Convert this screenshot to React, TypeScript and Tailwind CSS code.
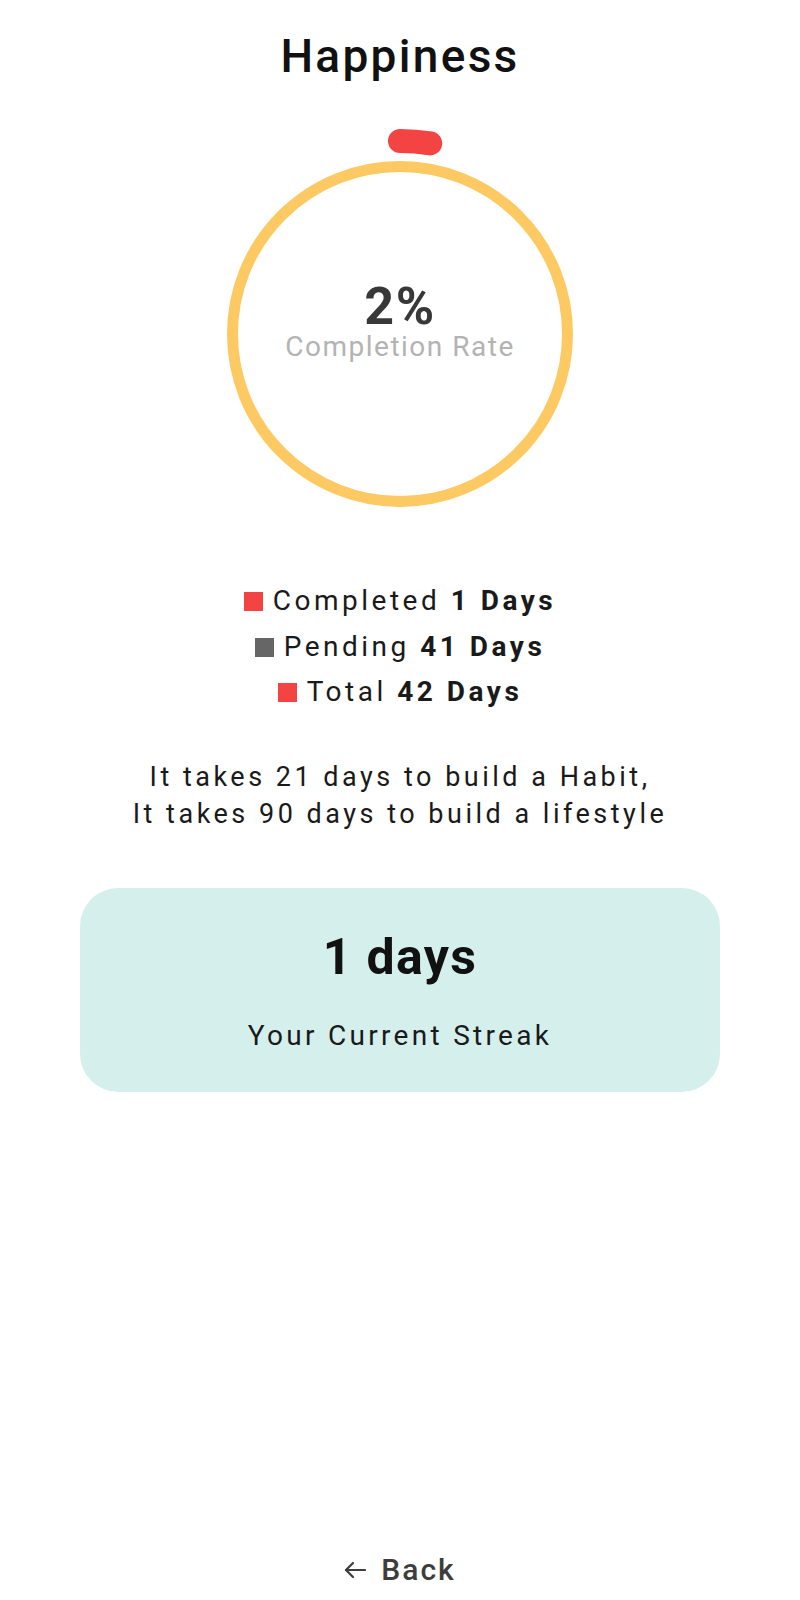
import React from 'react'

const ringColor = '#fcc963'
const red = '#f44343'

function ProgressRing({ percent }: { percent: number }) {
  const cx = 210
  const cy = 210
  const r = 193
  const angle = (percent / 100) * 360 * 1.25
  const rad = (angle * Math.PI) / 180
  const ex = cx + r * Math.sin(rad)
  const ey = cy - r * Math.cos(rad)

  return (
    <div className="relative mx-auto w-[420px] h-[420px]">
      <svg width="420" height="420" viewBox="0 0 420 420">
        <circle cx={cx} cy={cy} r={167.5} fill="none" stroke={ringColor} strokeWidth={11} />
        <path
          d={`M ${cx} ${cy - r} A ${r} ${r} 0 0 1 ${ex} ${ey}`}
          fill="none"
          stroke={red}
          strokeWidth={24}
          strokeLinecap="round"
        />
      </svg>
      {/* centre label */}
      <div className="absolute left-0 right-0 top-[159px] flex flex-col items-center">
        <span className="text-[52px] leading-[48px] font-bold text-[#383838] tracking-[1.5px]">{percent}%</span>
        <span className="mt-[2px] text-[28px] leading-[28px] text-[#b3b3b3] tracking-[1.5px]">Completion Rate</span>
      </div>
    </div>
  )
}

function LegendRow({ color, label, value }: { color: string; label: string; value: string }) {
  return (
    <div className="flex items-center justify-center gap-[10px] text-[28px] leading-[45.5px] tracking-[3.5px] text-[#1a1a1a]">
      <span className="w-[19px] h-[19px] mt-[2px]" style={{ backgroundColor: color }} />
      <span>
        {label} <span className="font-bold">{value}</span>
      </span>
    </div>
  )
}

export default function App() {
  return (
    <div className="min-h-[1600px] flex flex-col bg-white font-['Roboto',sans-serif]">
      <h1 className="mt-[33px] text-center text-[46px] leading-none font-medium tracking-[2.3px] text-[#111]">
        Happiness
      </h1>

      <div className="mt-[45px]">
        <ProgressRing percent={2} />
      </div>

      <div className="mt-[34px] flex flex-col">
        <LegendRow color={red} label="Completed" value="1 Days" />
        <LegendRow color="#666666" label="Pending" value="41 Days" />
        <LegendRow color={red} label="Total" value="42 Days" />
      </div>

      <p className="mt-[44px] text-center text-[27px] leading-[37px] tracking-[3.5px] text-[#1a1a1a]">
        It takes 21 days to build a Habit,
        <br />
        It takes 90 days to build a lifestyle
      </p>

      <div className="mt-[55px] mx-[80px] rounded-[38px] bg-[#d5f0ec] pt-[44px] pb-[42px] flex flex-col items-center">
        <span className="text-[50px] leading-none font-bold tracking-[1.3px] text-[#111]">1 days</span>
        <span className="mt-[40px] text-[28px] leading-none tracking-[3.3px] text-[#1a1a1a]">Your Current Streak</span>
      </div>

      <button className="mt-auto mb-[15px] mx-auto flex items-center gap-[15px] text-[30px] leading-none font-medium tracking-[2px] text-[#3d3d3d]">
        <svg width="22" height="18" viewBox="0 0 22 18" fill="none" stroke="#3d3d3d" strokeWidth="2.2" strokeLinecap="round" strokeLinejoin="round">
          <path d="M21 9H2" />
          <path d="M9 2L2 9l7 7" />
        </svg>
        <span>Back</span>
      </button>
    </div>
  )
}
